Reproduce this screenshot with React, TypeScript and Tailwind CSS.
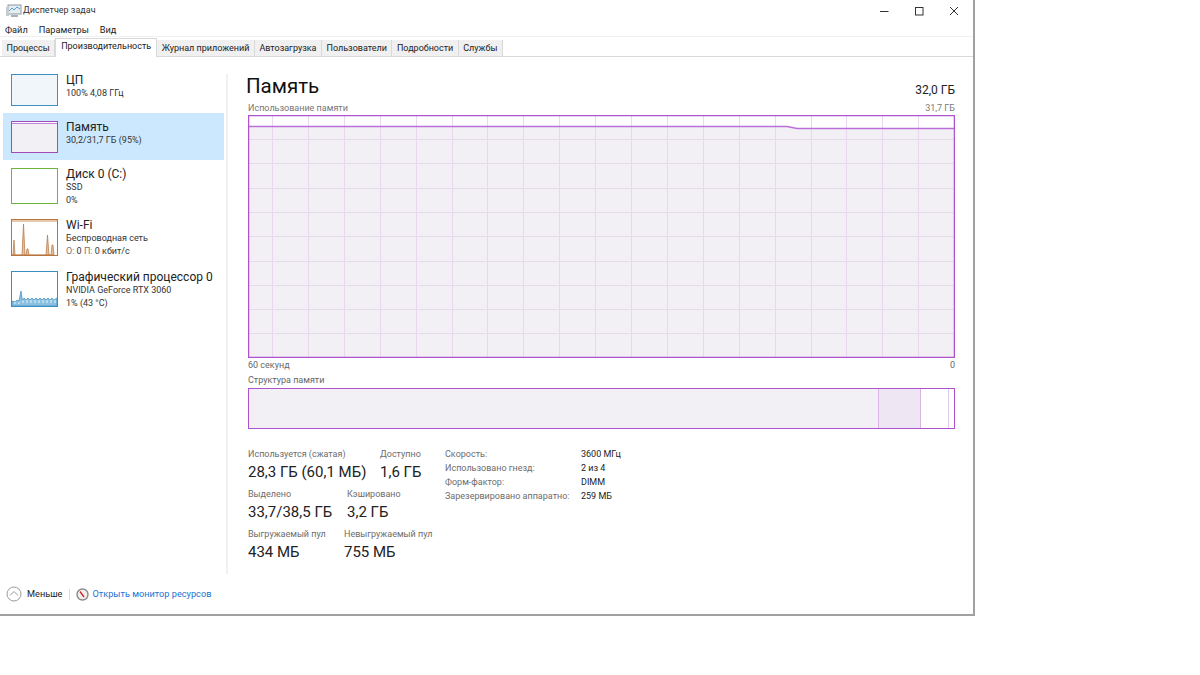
const tabs = ["Процессы", "Производительность", "Журнал приложений", "Автозагрузка", "Пользователи", "Подробности", "Службы"];

const vLines = Array.from({ length: 19 }, (_, i) => 24 + i * 35.9);
const hLines = Array.from({ length: 9 }, (_, i) => 24 + i * 24.3);

function AppIcon() {
  return (
    <svg width="16" height="15" viewBox="0 0 16 15" className="shrink-0">
      <rect x="2" y="2" width="13" height="9" fill="#e3edf2" stroke="#8d9aa3" />
      <path d="M3 8 L6 5 L8 7 L11 4 L14 6" fill="none" stroke="#5aa0c4" />
      <path d="M5 12 H12 V14 H5 Z" fill="#a9b2b8" />
      <rect x="0" y="4" width="3" height="9" fill="#c7ccd0" />
    </svg>
  );
}

function WindowButtons() {
  return (
    <div className="flex items-center gap-[25px] pr-[14px] pt-[1px]">
      <svg width="10" height="10" viewBox="0 0 10 10"><path d="M1 5.5 H9.5" stroke="#333" strokeWidth="1" /></svg>
      <svg width="10" height="10" viewBox="0 0 10 10"><rect x="1.5" y="1.5" width="7.5" height="7.5" fill="none" stroke="#333" strokeWidth="1" /></svg>
      <svg width="10" height="10" viewBox="0 0 10 10"><path d="M1 1 L9 9 M9 1 L1 9" stroke="#333" strokeWidth="1" /></svg>
    </div>
  );
}

function WifiThumb() {
  return (
    <svg width="47" height="37" viewBox="0 0 47 37" className="block">
      <rect x="0.5" y="0.5" width="46" height="36" fill="#fff" stroke="#b8743c" />
      <rect x="1" y="1" width="45" height="2" fill="#e6c9ae" />
      <path d="M1 36 L2 36 L3 21 L4 36 L11 36 L12.5 5 L14 36 L15 36 L16 30 L17 30 L18 36 L35 36 L36.5 16 L38 36 L40 36 L41 26 L42 26 L43 36 Z" fill="#e3bf9f" stroke="#b8743c" strokeWidth="0.7" />
      <rect x="0.5" y="0.5" width="46" height="36" fill="none" stroke="#b8743c" />
    </svg>
  );
}

function GpuThumb() {
  return (
    <svg width="47" height="36" viewBox="0 0 47 36" className="block">
      <rect x="0.5" y="0.5" width="46" height="35" fill="#fff" stroke="#3a8fc0" />
      <path d="M1 35 L1 30 L4 31 L6 29 L8 30 L10 20 L11.5 30 L13 27 L15 29 L17 27 L19 29 L21 27 L23 29 L25 27 L27 29 L29 27 L31 29 L33 27 L35 29 L37 27 L39 29 L41 27 L43 29 L46 27 L46 35 Z" fill="#8cc0e0" stroke="#3a8fc0" strokeWidth="0.7" />
      <path d="M4 33 V31 M8 33 V31 M12 32 V29 M16 32 V29 M20 32 V29 M24 32 V29 M28 32 V29 M32 32 V29 M36 32 V29 M40 32 V29 M44 32 V29" stroke="#fff" strokeWidth="0.8" />
    </svg>
  );
}

function SideItem({ thumb, title, lines, active, height }: { thumb: React.ReactNode; title: string; lines: React.ReactNode[]; active?: boolean; height: string }) {
  return (
    <div className={`flex gap-[8px] pl-[8px] pt-[8px] ${height} ${active ? "bg-[#cce8ff]" : ""}`}>
      {thumb}
      <div className="flex flex-col">
        <div className="text-[12px] leading-[13px] text-[#222] whitespace-nowrap">{title}</div>
        {lines.map((l, i) => (
          <div key={i} className="text-[9px] leading-[13px] text-[#333] whitespace-nowrap">{l}</div>
        ))}
      </div>
    </div>
  );
}

function Stat({ label, value, width }: { label: string; value: string; width: string }) {
  return (
    <div className={`${width} shrink-0`}>
      <div className="text-[9px] leading-[14px] text-[#6d6d6d] whitespace-nowrap">{label}</div>
      <div className="text-[15px] leading-[20px] mt-[1px] text-[#222] whitespace-nowrap">{value}</div>
    </div>
  );
}

function UsageChart() {
  return (
    <svg width="707" height="243" viewBox="0 0 707 243" className="block">
      <rect x="0" y="0" width="707" height="243" fill="#fff" />
      <path d="M0 11 H539 L549 13 H707 V243 H0 Z" fill="#f3f0f5" />
      {vLines.map((x) => (
        <path key={x} d={`M${Math.round(x) + 0.5} 0 V243`} stroke="#e9d6ef" strokeWidth="1" />
      ))}
      {hLines.map((y) => (
        <path key={y} d={`M0 ${Math.round(y) + 0.5} H707`} stroke="#e7dbea" strokeWidth="1" />
      ))}
      <path d="M0 11.5 H539 L549 13.5 H707" fill="none" stroke="#bb6fd6" strokeWidth="1.3" />
      <rect x="0.6" y="0.6" width="705.8" height="241.8" fill="none" stroke="#ae52cf" strokeWidth="1.3" />
    </svg>
  );
}

export default function App() {
  return (
    <div className="w-[1200px] h-[675px] bg-white overflow-hidden text-[#222]" style={{ fontFamily: 'Roboto, "Noto Sans", sans-serif' }}>
      <div className="w-[975px] h-[616px] border-r-[2px] border-b-[2px] border-[#a0a0a0] flex flex-col">
        {/* title */}
        <div className="h-[20px] flex items-center justify-between pl-[6px]">
          <div className="flex items-center text-[9px] leading-[20px] whitespace-nowrap">
            <AppIcon />
            <span className="ml-[1px] text-[#333]">Диспетчер задач</span>
          </div>
          <WindowButtons />
        </div>

        {/* menu */}
        <div className="h-[17px] border-b border-[#f0f0f0] flex gap-[11px] pl-[5px] text-[9.2px] leading-[19px] whitespace-nowrap">
          <span>Файл</span>
          <span>Параметры</span>
          <span>Вид</span>
        </div>

        {/* tabs */}
        <div className="h-[20px] flex items-end pl-[2px] border-b border-[#d9d9d9] text-[9px] whitespace-nowrap">
          {tabs.map((t, i) =>
            i === 1 ? (
              <div key={t} className="h-[19px] mb-[-1px] bg-white border border-b-0 border-[#d9d9d9] px-[5px] leading-[15px] relative z-10">{t}</div>
            ) : (
              <div key={t} className="h-[16px] bg-[#f0f0f0] border-r border-[#d9d9d9] px-[4.5px] leading-[16px]">{t}</div>
            ),
          )}
        </div>

        {/* body */}
        <div className="flex flex-1 min-h-0">
          <div className="w-[221px] ml-[3px] shrink-0 pt-[9px]">
            <SideItem
              height="h-[47px]"
              thumb={<div className="w-[47px] h-[32px] border border-[#3f8fc0] bg-[#f1f6fa] shrink-0" />}
              title="ЦП"
              lines={["100%  4,08 ГГц"]}
            />
            <SideItem
              active
              height="h-[47px]"
              thumb={
                <div className="w-[47px] h-[32px] border border-[#a04cb8] bg-[#f3f0f5] shrink-0">
                  <div className="h-[2px] bg-white border-b border-[#c583da]" />
                </div>
              }
              title="Память"
              lines={["30,2/31,7 ГБ (95%)"]}
            />
            <SideItem
              height="h-[51px]"
              thumb={<div className="w-[47px] h-[36px] border border-[#6eb53f] bg-white shrink-0" />}
              title="Диск 0 (C:)"
              lines={["SSD", "0%"]}
            />
            <SideItem
              height="h-[52px]"
              thumb={<div className="shrink-0"><WifiThumb /></div>}
              title="Wi-Fi"
              lines={[
                "Беспроводная сеть",
                <span key="o"><span className="text-[#777]">О:</span> 0 <span className="text-[#777]">П:</span> 0 кбит/с</span>,
              ]}
            />
            <SideItem
              height="h-[52px]"
              thumb={<div className="shrink-0"><GpuThumb /></div>}
              title="Графический процессор 0"
              lines={["NVIDIA GeForce RTX 3060", "1%  (43 °C)"]}
            />
          </div>
          <div className="w-[2px] h-[500px] mt-[17px] ml-[2px] shrink-0 bg-[#f0f0f0]" />

          <div className="w-[707px] ml-[20px] pt-[16px] flex flex-col">
            <div className="flex justify-between items-end h-[26px]">
              <div className="text-[20.5px] leading-[26px] text-[#111] ml-[-2px]">Память</div>
              <div className="text-[12px] leading-[16px] mb-[1px]">32,0 ГБ</div>
            </div>
            <div className="flex justify-between text-[9px] leading-[14px] text-[#777] mt-[2px] h-[14px]">
              <span>Использование памяти</span>
              <span>31,7 ГБ</span>
            </div>
            <UsageChart />
            <div className="flex justify-between text-[9px] leading-[14px] text-[#666] h-[15px]">
              <span>60 секунд</span>
              <span>0</span>
            </div>
            <div className="text-[9px] leading-[14px] text-[#666] h-[15px]">Структура памяти</div>
            <div className="h-[41px] border-[1.3px] border-[#ae52cf] flex">
              <div className="w-[630px] bg-[#f3f0f5] border-r border-[#d9b4e5]" />
              <div className="w-[42px] bg-[#eee6f2] border-r border-[#d9b4e5]" />
              <div className="w-[28px] bg-white border-r border-[#e0c8e8]" />
              <div className="flex-1 bg-white" />
            </div>

            <div className="flex mt-[18px]">
              <div className="w-[197px] shrink-0 flex flex-col gap-[5px]">
                <div className="flex">
                  <Stat width="w-[132px]" label="Используется (сжатая)" value="28,3 ГБ (60,1 МБ)" />
                  <Stat width="w-[60px]" label="Доступно" value="1,6 ГБ" />
                </div>
                <div className="flex">
                  <Stat width="w-[99px]" label="Выделено" value="33,7/38,5 ГБ" />
                  <Stat width="w-[60px]" label="Кэшировано" value="3,2 ГБ" />
                </div>
                <div className="flex">
                  <Stat width="w-[96px]" label="Выгружаемый пул" value="434 МБ" />
                  <Stat width="w-[90px]" label="Невыгружаемый пул" value="755 МБ" />
                </div>
              </div>
              <div className="grid grid-cols-[136px_auto] content-start justify-start text-[9px] leading-[14px] whitespace-nowrap">
                <span className="text-[#6d6d6d]">Скорость:</span><span>3600 МГц</span>
                <span className="text-[#6d6d6d]">Использовано гнезд:</span><span>2 из 4</span>
                <span className="text-[#6d6d6d]">Форм-фактор:</span><span>DIMM</span>
                <span className="text-[#6d6d6d]">Зарезервировано аппаратно:</span><span>259 МБ</span>
              </div>
            </div>
          </div>
        </div>

        {/* footer */}
        <div className="h-[40px] shrink-0 flex items-center pl-[6px] text-[9.2px] whitespace-nowrap">
          <svg width="16" height="16" viewBox="0 0 16 16" className="shrink-0">
            <circle cx="8" cy="8" r="7" fill="#fff" stroke="#9a9a9a" />
            <path d="M4 9.5 L8 5.5 L12 9.5" fill="none" stroke="#9a9a9a" />
          </svg>
          <span className="ml-[5px] text-[#222]">Меньше</span>
          <div className="w-px h-[11px] bg-[#dcdcdc] mx-[6px]" />
          <svg width="13" height="13" viewBox="0 0 13 13" className="shrink-0">
            <circle cx="6.5" cy="6.5" r="5.5" fill="#f3efe9" stroke="#8a8a8a" strokeWidth="1.4" />
            <path d="M4 3.5 L8 9" stroke="#cc2233" strokeWidth="1.3" />
          </svg>
          <span className="ml-[4px] text-[#1a73d4]">Открыть монитор ресурсов</span>
        </div>
      </div>
    </div>
  );
}
